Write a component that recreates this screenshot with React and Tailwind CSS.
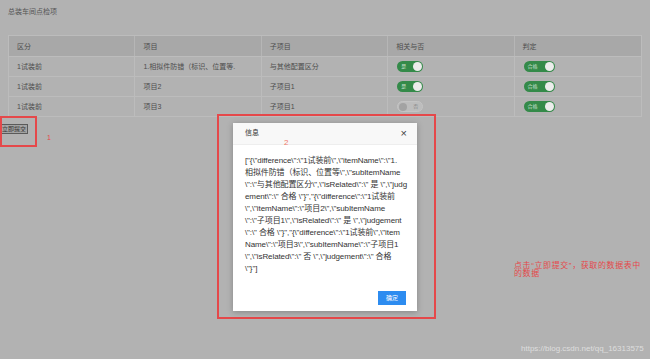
import React from "react";

const rows = [
  ["1试装前", "1.相拟件防错（标识、位置等.", "与其他配置区分", true, "是"],
  ["1试装前", "项目2", "子项目1", true, "是"],
  ["1试装前", "项目3", "子项目1", false, "否"],
];

function Switch({ on, label, w }) {
  if (on) {
    return (
      <div className={`flex items-center justify-between h-[11px] ${w} rounded-full bg-[#348a49] pl-[4px] pr-[1px]`}>
        <span className="text-[5px] leading-none text-[#cfe3d3]">{label}</span>
        <span className="w-[9px] h-[9px] rounded-full bg-[#ececec]" />
      </div>
    );
  }
  return (
    <div className={`flex items-center justify-between h-[11px] ${w} rounded-full bg-[#bdbdbd] border border-[#c4c4c4] pl-[1px] pr-[4px]`}>
      <span className="w-[8px] h-[8px] rounded-full bg-[#a3a3a3]" />
      <span className="text-[5px] leading-none text-[#8a8a8a]">{label}</span>
    </div>
  );
}

const lines = [
  '["{\\"difference\\":\\"1试装前\\",\\"itemName\\":\\"1.',
  '相拟件防错（标识、位置等\\",\\"subItemName',
  '\\":\\"与其他配置区分\\",\\"isRelated\\":\\" 是 \\",\\"judg',
  'ement\\":\\" 合格 \\"}","{\\"difference\\":\\"1试装前',
  '\\",\\"itemName\\":\\"项目2\\",\\"subItemName',
  '\\":\\"子项目1\\",\\"isRelated\\":\\" 是 \\",\\"judgement',
  '\\":\\" 合格 \\"}","{\\"difference\\":\\"1试装前\\",\\"item',
  'Name\\":\\"项目3\\",\\"subItemName\\":\\"子项目1',
  '\\",\\"isRelated\\":\\" 否 \\",\\"judgement\\":\\" 合格',
  '\\"}"]',
];

export default function App() {
  return (
    <div className="relative w-[650px] h-[359px] overflow-hidden bg-[#b2b2b2] font-['Liberation_Sans','Noto_Sans_CJK_SC',sans-serif] text-[#4d4d4d]">
      <div className="pt-[7px] pl-[8px] text-[7px] leading-[9px] text-[#555]">总装车间点检项</div>

      <div className="mt-[19px] mx-[8px] w-[634px] border border-[#bcbcbc] text-[7px] leading-[9px]">
        <div className="grid grid-cols-5 h-[20px] bg-[#a8a8a8]">
          {["区分", "项目", "子项目", "相关与否", "判定"].map((h, i) => (
            <div key={h} className={`flex items-center pl-[8px] ${i < 4 ? "border-r border-[#b6b6b6]" : ""}`}>{h}</div>
          ))}
        </div>
        {rows.map((r, idx) => (
          <div key={idx} className="grid grid-cols-5 h-[20px] border-t border-[#bcbcbc]">
            <div className="flex items-center pl-[8px] border-r border-[#bcbcbc]">{r[0]}</div>
            <div className="flex items-center pl-[8px] border-r border-[#bcbcbc] whitespace-nowrap">{r[1]}</div>
            <div className="flex items-center pl-[8px] border-r border-[#bcbcbc]">{r[2]}</div>
            <div className="flex items-center pl-[9px] border-r border-[#bcbcbc]">
              <Switch on={r[3]} label={r[4]} w="w-[26px]" />
            </div>
            <div className="flex items-center pl-[9px]">
              <Switch on={true} label="合格" w="w-[31px]" />
            </div>
          </div>
        ))}
      </div>

      <div className="mt-[7px] flex">
        <button className="h-[10px] px-[1px] border border-[#5a5a5a] bg-[#a4a4a4] text-[6px] leading-[8px] text-[#333]">立即提交</button>
      </div>

      {/* annotations */}
      <div className="absolute left-0 top-[116px] w-[37px] h-[31px] border-2 border-[#e5484a]" />
      <div className="absolute left-[47px] top-[133px] text-[7px] text-[#e5484a]">1</div>
      <div className="absolute left-[217px] top-[114px] w-[219px] h-[205px] border-2 border-[#e5484a]" />

      {/* dialog */}
      <div className="absolute left-[233px] top-[123px] w-[184px] h-[188px] bg-white shadow-[0_1px_6px_rgba(0,0,0,0.25)] flex flex-col">
        <div className="h-[22px] bg-[#f8f8f8] border-b border-[#eee] flex items-center justify-between pl-[12px] pr-[10px]">
          <span className="text-[7px] text-[#333]">信息</span>
          <span className="text-[11px] leading-none text-[#444]">×</span>
        </div>
        <div className="pt-[10px] pl-[12px] text-[8px] leading-[12px] text-[#333] whitespace-nowrap tracking-[-0.1px]">
          {lines.map((l, i) => (
            <div key={i}>{l}</div>
          ))}
        </div>
        <div className="mt-auto mb-[6px] mr-[11px] flex justify-end">
          <button className="w-[28px] h-[14px] bg-[#2d8cf0] text-white text-[6px] leading-none">确定</button>
        </div>
      </div>
      <div className="absolute left-[284px] top-[137px] text-[8px] text-[#f07a6a]">2</div>

      <div className="absolute left-[514px] top-[262px] text-[8px] leading-[8px] tracking-[0.6px] text-[#e5484a] whitespace-nowrap">
        点击“立即提交”，获取的数据表中<br />的数据
      </div>
      <div className="absolute left-[521px] top-[344px] text-[8px] leading-[9px] text-[#dedede]">
        https://blog.csdn.net/qq_16313575
      </div>
    </div>
  );
}
